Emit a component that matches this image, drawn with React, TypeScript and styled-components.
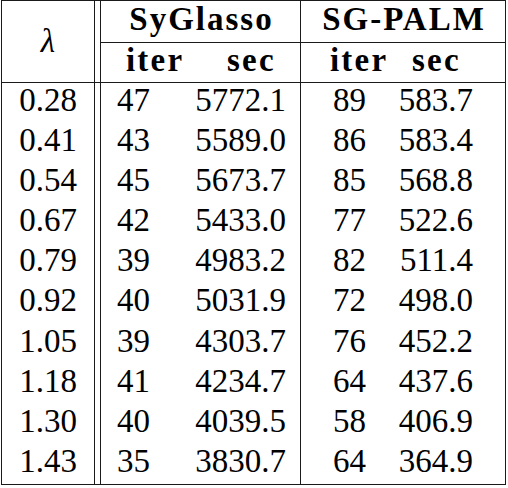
import { Fragment } from "react";
import styled, { createGlobalStyle, css } from "styled-components";

const GlobalStyle = createGlobalStyle`
  html, body {
    margin: 0;
    padding: 0;
    background: #fff;
    font-family: "Liberation Serif", serif;
  }
`;

const rows: [string, string, string, string, string][] = [
  ["0.28", "47", "5772.1", "89", "583.7"],
  ["0.41", "43", "5589.0", "86", "583.4"],
  ["0.54", "45", "5673.7", "85", "568.8"],
  ["0.67", "42", "5433.0", "77", "522.6"],
  ["0.79", "39", "4983.2", "82", "511.4"],
  ["0.92", "40", "5031.9", "72", "498.0"],
  ["1.05", "39", "4303.7", "76", "452.2"],
  ["1.18", "41", "4234.7", "64", "437.6"],
  ["1.30", "40", "4039.5", "58", "406.9"],
  ["1.43", "35", "3830.7", "64", "364.9"],
];

const rule = "1px solid #1a1a1a";

const cellText = css`
  font-family: "Liberation Serif", serif;
  font-size: 33px;
  line-height: 34px;
  color: #000;
`;

const Table = styled.div`
  display: grid;
  grid-template-columns: 93px 5px 86px 115px 95px 109px;
  grid-template-rows: 42px 40px repeat(10, 40.1px);
  width: fit-content;
  margin-left: 1px;
  border: ${rule};
`;

const LambdaHead = styled.div`
  ${cellText}
  grid-row: 1 / span 2;
  border-right: ${rule};
  border-bottom: ${rule};
  display: flex;
  align-items: center;
  justify-content: center;
  font-style: italic;
  padding-bottom: 2px;
`;

const Gap = styled.div<{ $head?: boolean }>`
  ${({ $head }) =>
    $head &&
    css`
      grid-row: 1 / span 2;
      border-bottom: ${rule};
    `}
`;

const GroupHead = styled.div<{ $first?: boolean }>`
  ${cellText}
  grid-column: span 2;
  border-bottom: ${rule};
  ${({ $first }) =>
    $first &&
    css`
      border-left: ${rule};
      border-right: ${rule};
    `}
  text-align: center;
  font-weight: bold;
  letter-spacing: 2px;
  padding-left: 2px;
  padding-top: 1px;
`;

const SubHead = styled.div<{ $pad: number; $left?: boolean; $right?: boolean }>`
  ${cellText}
  border-bottom: ${rule};
  ${({ $left }) => $left && `border-left: ${rule};`}
  ${({ $right }) => $right && `border-right: ${rule};`}
  padding-left: ${({ $pad }) => $pad}px;
  font-weight: bold;
  letter-spacing: 2.2px;
  white-space: nowrap;
`;

const LambdaCell = styled.div`
  ${cellText}
  border-right: ${rule};
  text-align: center;
`;

const NumCell = styled.div<{ $pad: number; $end?: boolean; $left?: boolean; $right?: boolean }>`
  ${cellText}
  ${({ $left }) => $left && `border-left: ${rule};`}
  ${({ $right }) => $right && `border-right: ${rule};`}
  text-align: ${({ $end }) => ($end ? "right" : "left")};
  ${({ $end, $pad }) => ($end ? `padding-right: ${$pad}px;` : `padding-left: ${$pad}px;`)}
`;

export default function App() {
  return (
    <>
      <GlobalStyle />
      <Table>
        <LambdaHead>λ</LambdaHead>
        <Gap $head />
        <GroupHead $first>SyGlasso</GroupHead>
        <GroupHead>SG-PALM</GroupHead>
        <SubHead $pad={25} $left>iter</SubHead>
        <SubHead $pad={41} $right>sec</SubHead>
        <SubHead $pad={29}>iter</SubHead>
        <SubHead $pad={16}>sec</SubHead>
        {rows.map(([lam, it1, s1, it2, s2]) => (
          <Fragment key={lam}>
            <LambdaCell>{lam}</LambdaCell>
            <Gap />
            <NumCell $pad={16} $left>{it1}</NumCell>
            <NumCell $pad={14} $end $right>{s1}</NumCell>
            <NumCell $pad={32}>{it2}</NumCell>
            <NumCell $pad={32} $end>{s2}</NumCell>
          </Fragment>
        ))}
      </Table>
    </>
  );
}
